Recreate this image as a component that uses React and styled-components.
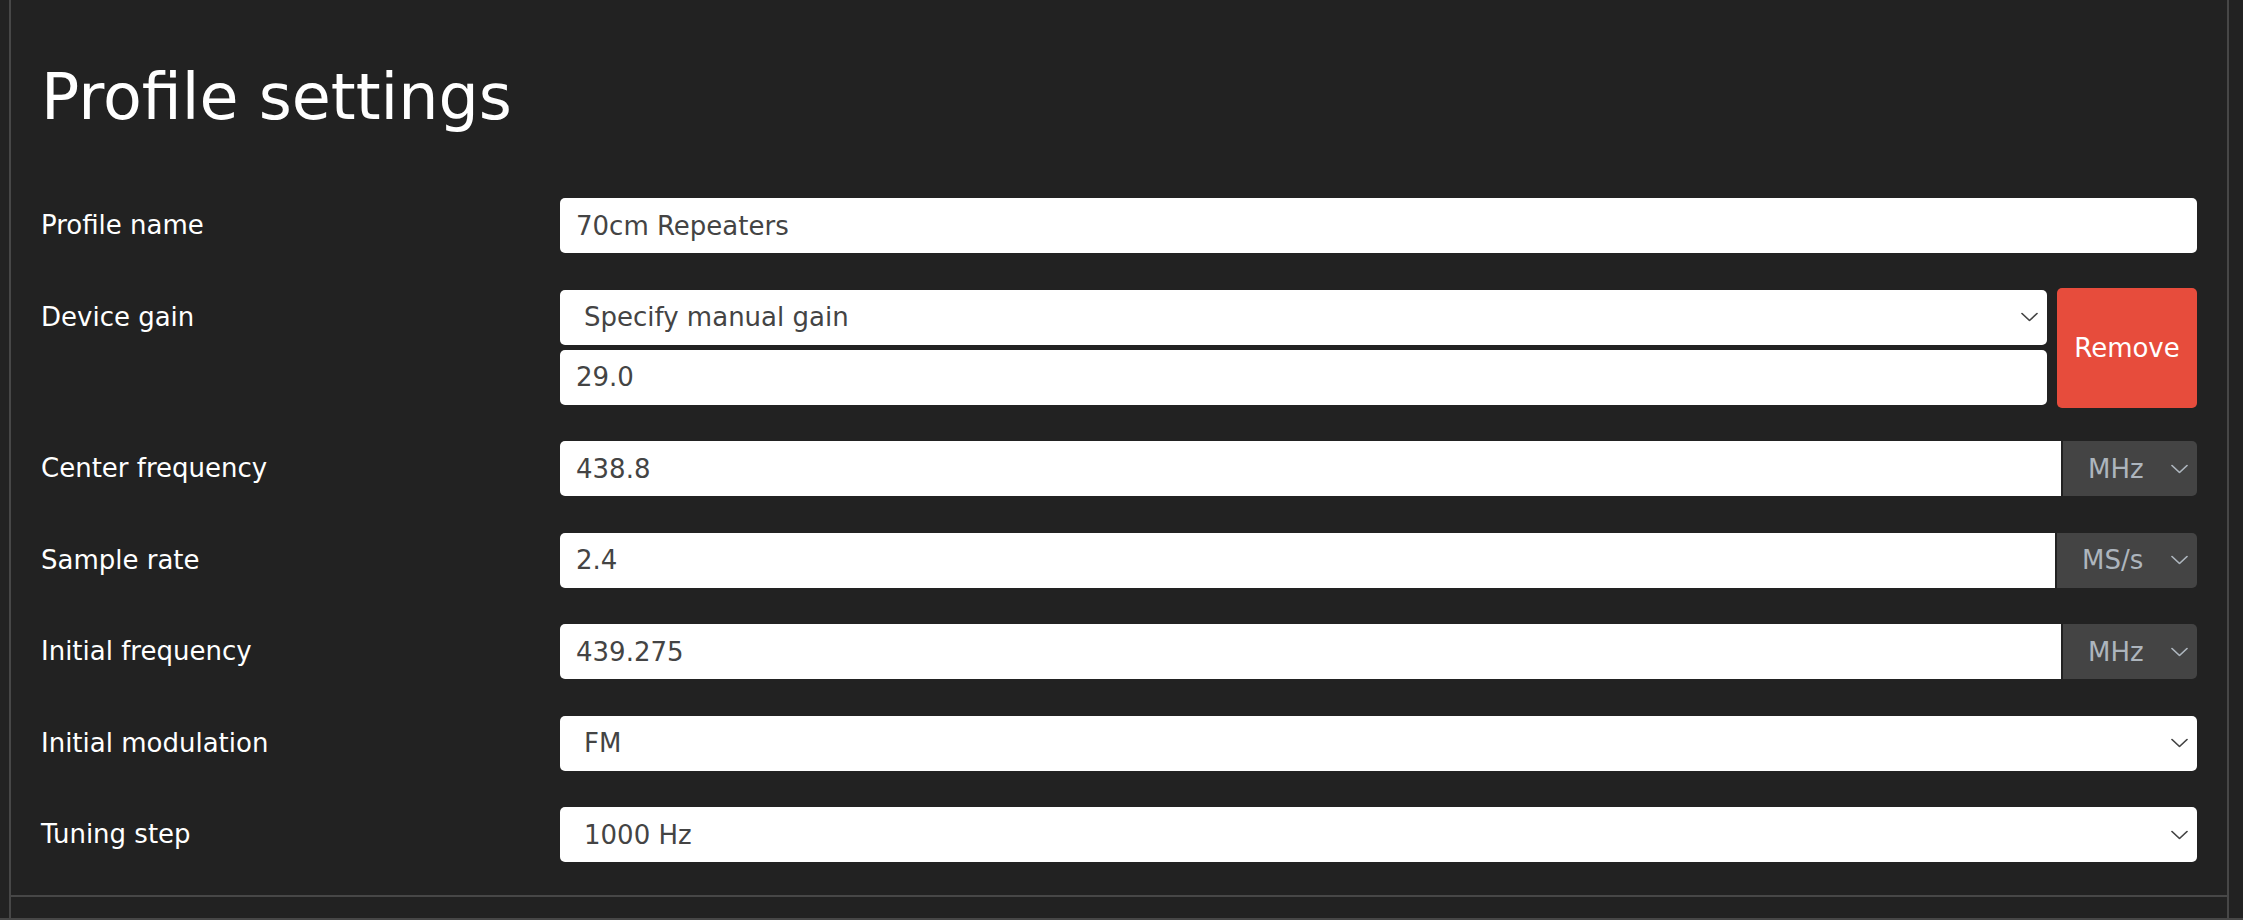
import React from 'react';
import styled, { createGlobalStyle } from 'styled-components';

const GlobalStyle = createGlobalStyle`
  html, body {
    margin: 0;
    padding: 0;
    background: #222;
  }
  body {
    font-family: "DejaVu Sans", Verdana, sans-serif;
    color: #fff;
  }
  * {
    box-sizing: border-box;
  }
`;

const LINE = '#474747';

const Chevron = ({ color }) => (
  <ChevronIcon viewBox="0 0 17 9" width="17" height="9" aria-hidden="true">
    <path d="M1 1l7.5 7 7.5-7" fill="none" stroke={color} strokeWidth="1.7" strokeLinecap="round" strokeLinejoin="round" />
  </ChevronIcon>
);

const ProfileSettings = () => (
  <Page>
    <GlobalStyle />
    <Card>
      <CardBody>
        <Title>Profile settings</Title>
        <Form>
          <Row>
            <Label>Profile name</Label>
            <TextInput defaultValue="70cm Repeaters" />
          </Row>

          <Row>
            <Label>Device gain</Label>
            <GainGroup>
              <GainStack>
                <SelectWrap>
                  <Select defaultValue="manual">
                    <option value="manual">Specify manual gain</option>
                  </Select>
                  <Chevron color="#444" />
                </SelectWrap>
                <TextInput defaultValue="29.0" />
              </GainStack>
              <RemoveButton type="button">Remove</RemoveButton>
            </GainGroup>
          </Row>

          <Row>
            <Label>Center frequency</Label>
            <InputGroup>
              <TextInput $grouped defaultValue="438.8" />
              <UnitWrap>
                <UnitSelect defaultValue="MHz">
                  <option>MHz</option>
                </UnitSelect>
                <Chevron color="#adb5bd" />
              </UnitWrap>
            </InputGroup>
          </Row>

          <Row>
            <Label>Sample rate</Label>
            <InputGroup>
              <TextInput $grouped defaultValue="2.4" />
              <UnitWrap>
                <UnitSelect defaultValue="MS/s">
                  <option>MS/s</option>
                </UnitSelect>
                <Chevron color="#adb5bd" />
              </UnitWrap>
            </InputGroup>
          </Row>

          <Row>
            <Label>Initial frequency</Label>
            <InputGroup>
              <TextInput $grouped defaultValue="439.275" />
              <UnitWrap>
                <UnitSelect defaultValue="MHz">
                  <option>MHz</option>
                </UnitSelect>
                <Chevron color="#adb5bd" />
              </UnitWrap>
            </InputGroup>
          </Row>

          <Row>
            <Label>Initial modulation</Label>
            <SelectWrap>
              <Select defaultValue="FM">
                <option>FM</option>
              </Select>
              <Chevron color="#444" />
            </SelectWrap>
          </Row>

          <Row>
            <Label>Tuning step</Label>
            <SelectWrap>
              <Select defaultValue="1000">
                <option value="1000">1000 Hz</option>
              </Select>
              <Chevron color="#444" />
            </SelectWrap>
          </Row>
        </Form>
      </CardBody>
      <Footer />
    </Card>
    <BottomRule />
  </Page>
);

const Page = styled.div`
  height: 920px;
  display: flex;
  flex-direction: column;
  overflow: hidden;
`;

const Card = styled.section`
  flex: 1;
  margin: 0 14px 0 9px;
  border-left: 2px solid ${LINE};
  border-right: 2px solid ${LINE};
  display: flex;
  flex-direction: column;
`;

const CardBody = styled.div`
  padding: 59px 30px 33px;
`;

const Footer = styled.div`
  flex: 1;
  border-top: 2px solid ${LINE};
`;

const BottomRule = styled.div`
  height: 2px;
  background: ${LINE};
`;

const Title = styled.h1`
  margin: 0 0 63px;
  font-size: 63.5px;
  line-height: 76px;
  font-weight: 400;
  color: #fff;
`;

const Form = styled.form`
  display: flex;
  flex-direction: column;
  gap: 36.5px;
`;

const Row = styled.div`
  display: grid;
  grid-template-columns: 519px 1fr;
  align-items: start;
`;

const Label = styled.label`
  font-size: 26px;
  line-height: 55px;
  color: #fff;
`;

const TextInput = styled.input`
  display: block;
  flex: ${({ $grouped }) => ($grouped ? '1 1 auto' : 'none')};
  width: 100%;
  min-width: 0;
  height: 55px;
  padding: 0 16px;
  border: 0;
  border-radius: ${({ $grouped }) => ($grouped ? '5px 0 0 5px' : '5px')};
  background: #fff;
  color: #444;
  font-family: inherit;
  font-size: 26px;
  outline: none;
`;

const SelectWrap = styled.div`
  position: relative;
  width: 100%;
`;

const Select = styled.select`
  display: block;
  width: 100%;
  height: 55px;
  padding: 0 48px 0 24px;
  border: 0;
  border-radius: 5px;
  background: #fff;
  color: #444;
  font-family: inherit;
  font-size: 26px;
  appearance: none;
  outline: none;
`;

const ChevronIcon = styled.svg`
  position: absolute;
  right: 9px;
  top: 50%;
  transform: translateY(-50%);
  pointer-events: none;
`;

const InputGroup = styled.div`
  display: flex;
  gap: 2px;
`;

const UnitWrap = styled.div`
  position: relative;
  flex: none;
`;

const UnitSelect = styled.select`
  display: block;
  height: 55px;
  padding: 0 53px 0 25px;
  border: 0;
  border-radius: 0 5px 5px 0;
  background: #444;
  color: #adb5bd;
  font-family: inherit;
  font-size: 26px;
  appearance: none;
  outline: none;
`;

const GainGroup = styled.div`
  display: flex;
  gap: 10px;
`;

const GainStack = styled.div`
  flex: 1;
  display: flex;
  flex-direction: column;
  gap: 5px;
`;

const RemoveButton = styled.button`
  flex: none;
  width: 140px;
  margin: -2px 0 -3px;
  border: 0;
  border-radius: 5px;
  background: #e74c3c;
  color: #fff;
  font-family: inherit;
  font-size: 26px;
  cursor: pointer;
`;

export default function App() {
  return <ProfileSettings />;
}
